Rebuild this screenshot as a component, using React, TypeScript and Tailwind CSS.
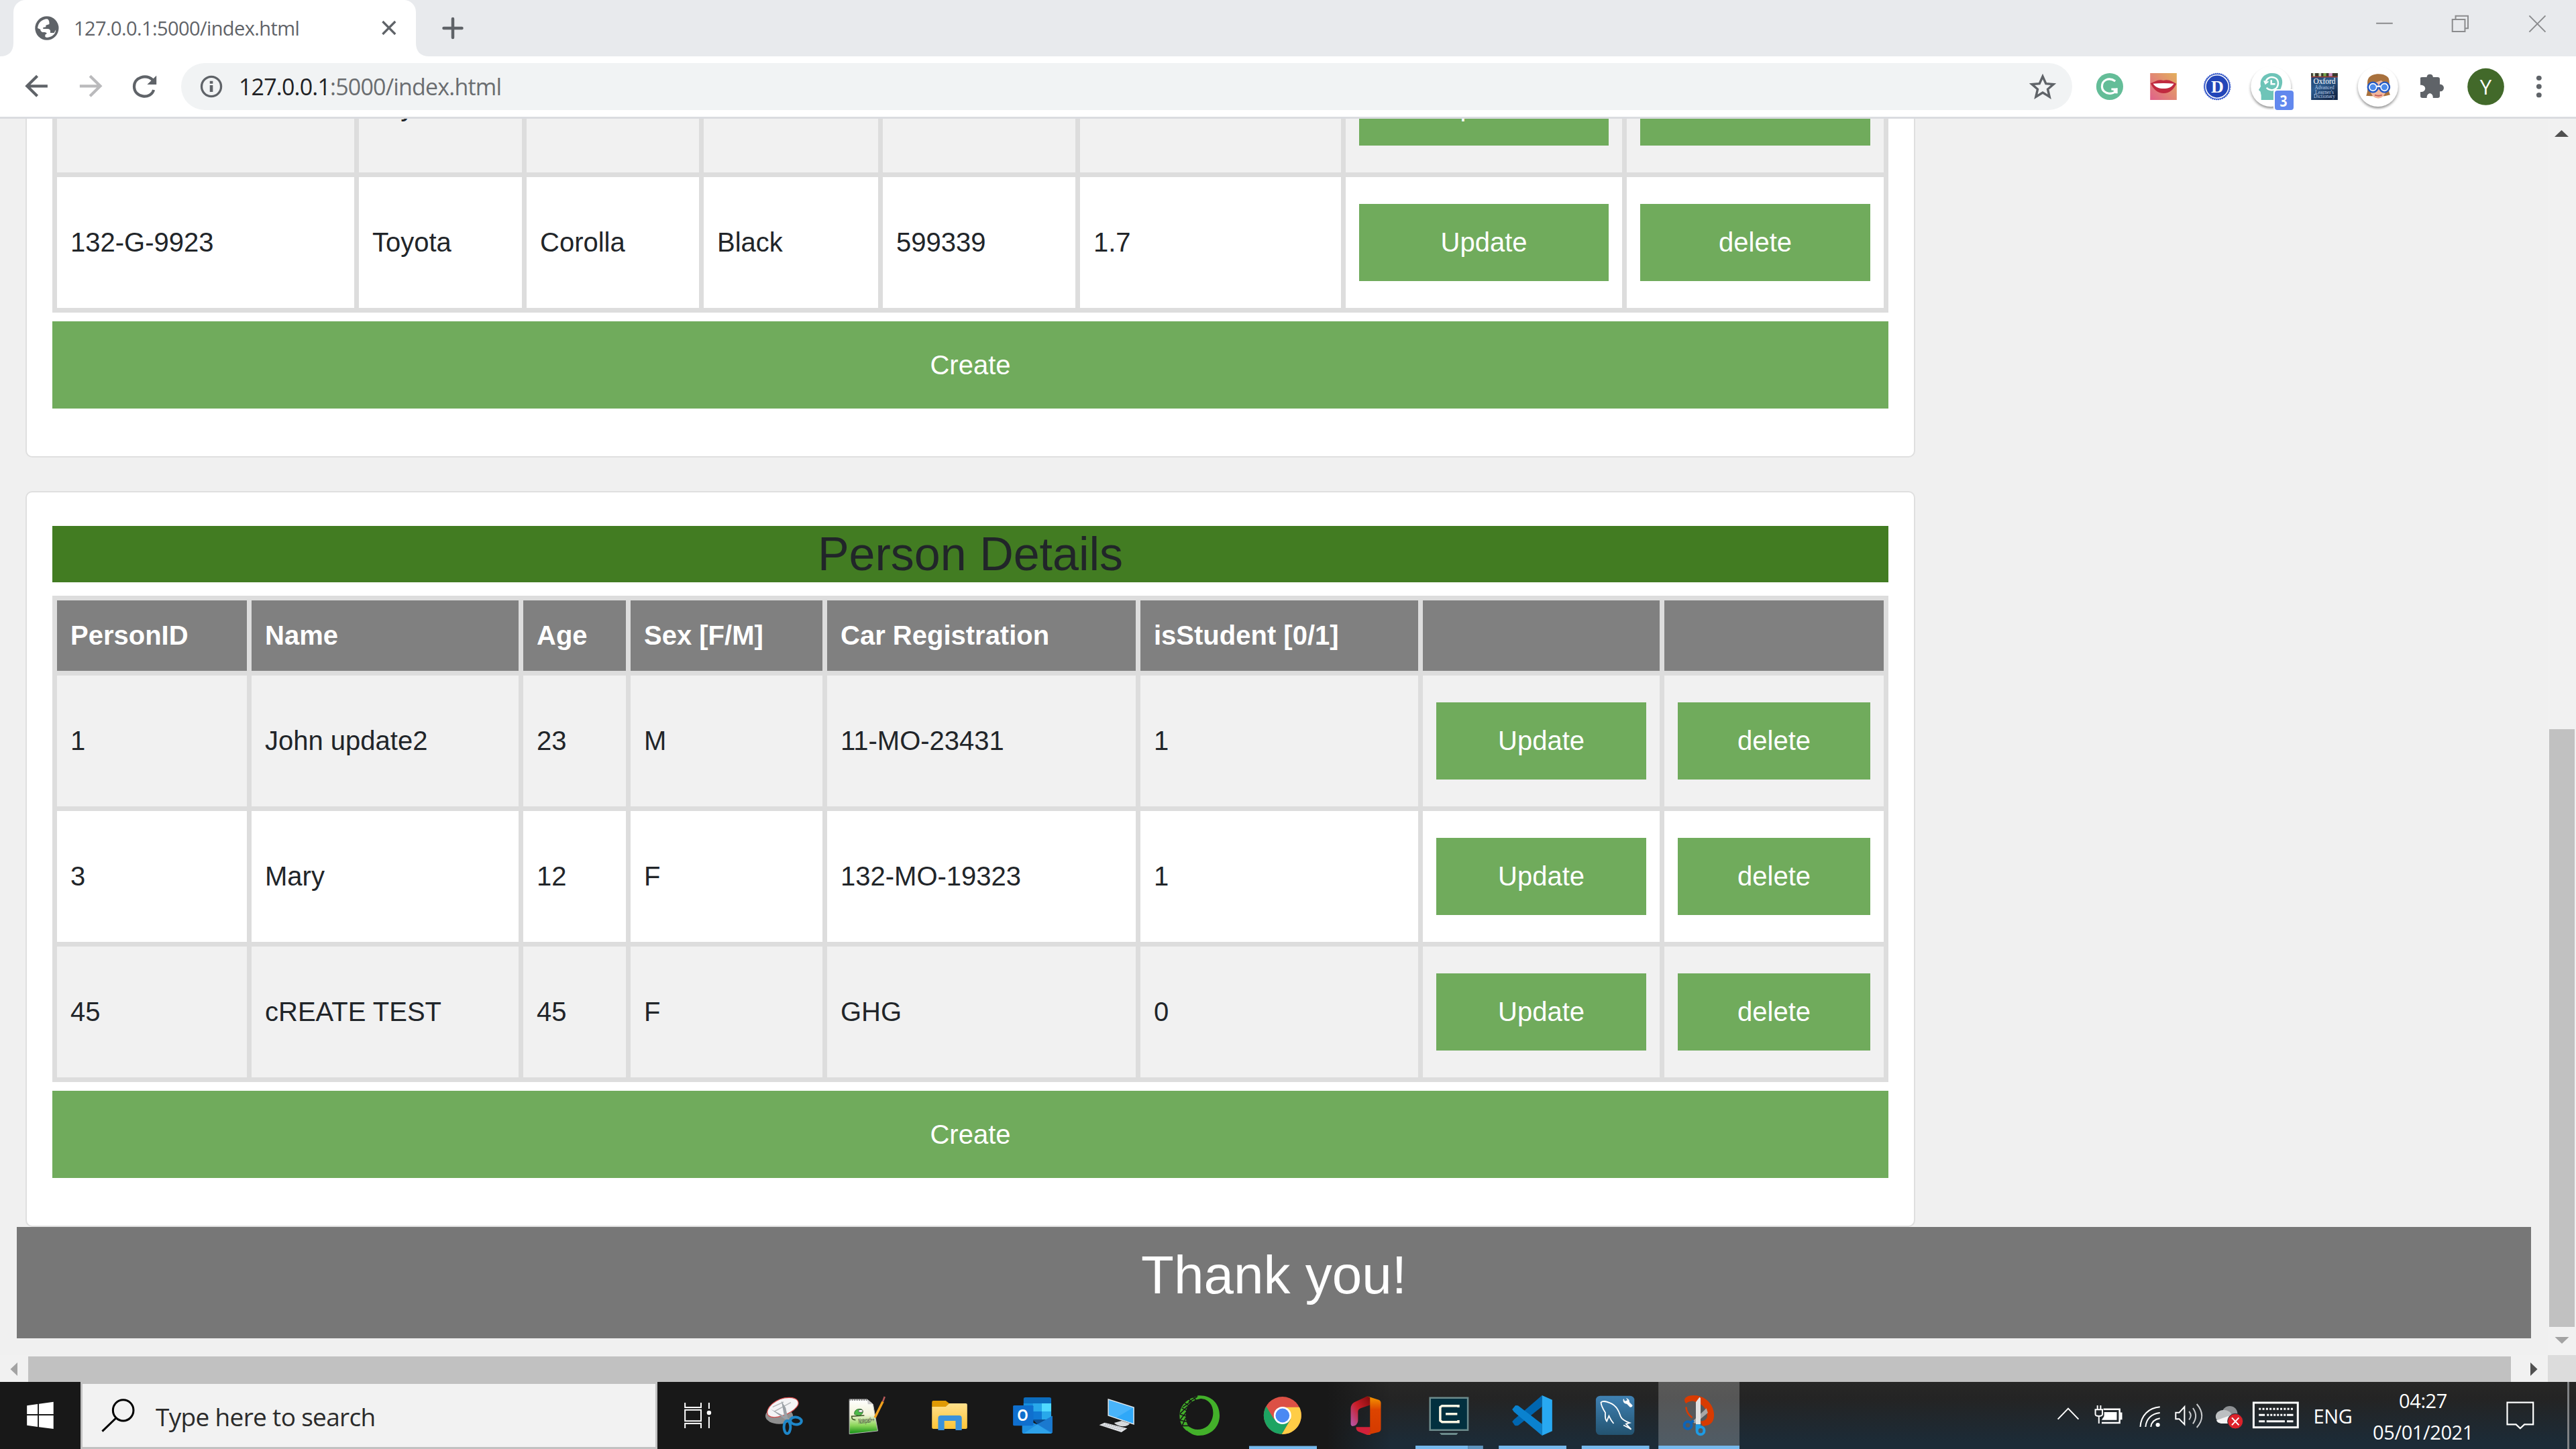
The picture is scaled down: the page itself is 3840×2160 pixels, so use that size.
import React from "react";

type GlyphProps = {
  x: number;
  y: number;
  w: number;
  h: number;
  t?: string;
  children?: React.ReactNode;
  over?: React.ReactNode;
  className?: string;
};

// Artwork is drawn on per-region grids; `t` maps a grid onto screen pixels.
const TAB = "scale(.5102 .33333)";
const EXT = "translate(3000 0) scale(.53571 .33333)";
const START = "translate(0 2000) scale(.63776 .33333)";
const APPS = "translate(1000 2040) scale(.5421 .33333)";
const APPS2 = "translate(1820 2040) scale(.5421 .33333)";
const TRAY = "translate(3020 2000) scale(.52296 .33333)";

function Glyph({ x, y, w, h, t, children, over, className = "" }: GlyphProps) {
  return (
    <svg width={w} height={h} viewBox={`${x} ${y} ${w} ${h}`} className={`block shrink-0 ${className}`} fill="none">
      <g transform={t} className="[&_*]:[vector-effect:non-scaling-stroke]">
        {children}
      </g>
      {over}
    </svg>
  );
}

function TabStrip() {
  return (
    <div className="flex h-[84px] shrink-0 items-stretch bg-[#e8eaed]">
      <Glyph x={0} y={0} w={20} h={84} t="">
        <path d="M0 84C13 84 20 77 20 64V84Z" fill="#fff" />
      </Glyph>
      <div className="flex w-[600px] items-center rounded-t-[18px] bg-white pl-8">
        <Glyph x={52} y={22} w={36} h={40} t={TAB}>
          <ellipse cx="137" cy="126" rx="34.5" ry="53.5" fill="#5f6368" />
          <path
            d="M110 126C111 103 122 86 138 85Q145 90 144 108L134 113V121L126 123V129H139Q147 130 147 139V147H158L163 133C163 152 152 167 137 168L132 165V155L137 150Q136 145 131 144L124 144Q118 140 118 131Z"
            fill="#fff"
          />
        </Glyph>
        <span className="ml-[22px] w-[458px] whitespace-nowrap text-[29px] leading-[40px] tracking-[-0.6px] text-[#5f6368]">
          127.0.0.1:5000/index.html
        </span>
        <Glyph x={568} y={30} w={24} h={24} t={TAB}>
          <path d="M1118 96L1155 153M1155 96L1118 153" stroke="#5f6368" strokeWidth="3.2" />
        </Glyph>
      </div>
      <Glyph x={620} y={0} w={90} h={84} t="">
        <path d="M620 84V64C620 77 627 84 640 84Z" fill="#fff" />
        <path d="M661.500 42H688.500M675 28V56" stroke="#5f6368" strokeWidth="4.500" strokeLinecap="round" />
      </Glyph>
      <div className="flex-1" />
      <Glyph x={3500} y={0} w={340} h={84} t={EXT} className="">
        <g stroke="#8b8c8e" strokeWidth="2">
          <path d="M1012 104.500H1058M1224 87H1259V141H1224ZM1233 87V71.500H1267.500V127H1259M1438 70L1483 143M1483 70L1438 143" />
        </g>
      </Glyph>
    </div>
  );
}

function Toolbar() {
  return (
    <div className="flex h-[93px] shrink-0 items-center border-b-[3px] border-[#dadce0] bg-white">
      <Glyph x={0} y={84} w={270} h={90} t={TAB}>
        <g strokeWidth="4.200">
          <path d="M139 385H80M109 340L79 385L109 430" stroke="#5f6368" />
          <path d="M233 385H293M263 340L293 385L263 430" stroke="#bababc" />
          <path d="M447 358C426 330 392 345 392 387C392 438 441 446 449 402" stroke="#5f6368" />
        </g>
        <path d="M457 338V378H430Z" fill="#5f6368" />
      </Glyph>
      <div className="flex h-[70px] w-[2819px] items-center rounded-full bg-[#f1f3f4]">
        <Glyph x={270} y={94} w={86} h={70} t={TAB}>
          <ellipse cx="617.500" cy="387" rx="28.500" ry="44" stroke="#5f6368" strokeWidth="3.300" />
          <path d="M613 362H622V374H613ZM613 381H622V411H613Z" fill="#5f6368" />
        </Glyph>
        <span className="flex-1 whitespace-nowrap text-[34px] leading-[46px] tracking-[-0.82px] text-[#6a6d70]">
          <span className="text-[#202124]">127.0.0.1</span>:5000/index.html
        </span>
        <Glyph x={3020} y={94} w={69} h={70} t={EXT}>
          <path
            d="M84 342L93 374L114 377L98 399L103 433L84 414L65 433L70 399L54 377L75 374Z"
            stroke="#5f6368"
            strokeWidth="3.400"
          />
        </Glyph>
      </div>
      <Glyph
        x={3089}
        y={84}
        w={751}
        h={90}
        t={EXT}
        over={
          <g textAnchor="middle">
            <text x="3305.500" y="138" fontSize="26" fontWeight="700" fill="#fff" fontFamily="'Liberation Serif', serif">
              D
            </text>
            <rect x="3389" y="133" width="32" height="31" rx="4" fill="#fff" />
            <rect x="3391" y="135" width="28" height="29" rx="4" fill="#6288ee" />
            <text x="3404" y="159" fontSize="23" fontWeight="700" fill="#fff" textLength="11" lengthAdjust="spacingAndGlyphs" fontFamily="'Open Sans', sans-serif">
              3
            </text>
            <g fill="#fff" fontFamily="'Liberation Serif', serif">
              <text x="3465" y="125" fontSize="13" textLength="33" lengthAdjust="spacingAndGlyphs">Oxford</text>
              <text x="3465" y="133" fontSize="8" fill="#b9cbe6" textLength="29" lengthAdjust="spacingAndGlyphs">Advanced</text>
              <text x="3465" y="139.500" fontSize="8" fill="#b9cbe6" textLength="28" lengthAdjust="spacingAndGlyphs">Learner&#39;s</text>
              <text x="3465" y="145.500" fontSize="8" fill="#b9cbe6" textLength="32" lengthAdjust="spacingAndGlyphs">Dictionary</text>
            </g>
            <text x="3705.500" y="141" fontSize="31" fill="#fff" fontFamily="'Open Sans', sans-serif">
              Y
            </text>
          </g>
        }
      >
        <defs>
          <linearGradient id="lip" x1="0" y1="1" x2="1" y2="0">
            <stop offset="0" stopColor="#e0608a" />
            <stop offset="1" stopColor="#e3b05c" />
          </linearGradient>
          <linearGradient id="oxf" x1="0" y1="0" x2="0.6" y2="1">
            <stop offset="0" stopColor="#1d3a63" />
            <stop offset=".5" stopColor="#2c5b8e" />
            <stop offset="1" stopColor="#12284a" />
          </linearGradient>
          <filter id="soft" x="-20%" y="-20%" width="140%" height="140%">
            <feGaussianBlur stdDeviation="4" />
          </filter>
        </defs>
        <ellipse cx="270.500" cy="387" rx="37.500" ry="60" fill="#64bd98" />
        <path d="M286 363C268 343 249 358 249 387C249 424 286 428 289 399H275M289 399V418" stroke="#fff" strokeWidth="3.200" />
        <path d="M276 400L292 394V418Z" fill="#fff" />
        <rect x="383" y="327" width="74" height="120" fill="url(#lip)" />
        <path d="M384 372C396 368 404 352 420 360C436 352 446 368 456 374C449 399 437 417 421 417C404 417 392 400 384 372Z" fill="#c02a3f" />
        <path d="M391 374Q420 370 449 374C443 390 433 396 420 396C408 396 398 390 391 374Z" fill="#fff" />
        <ellipse cx="569.500" cy="387" rx="36" ry="58" fill="#2346b8" stroke="#3c5fd0" strokeWidth="2" strokeDasharray="2 1" />
        <ellipse cx="569.500" cy="387" rx="32" ry="51.500" stroke="#fff" strokeWidth="1.500" />
        <ellipse cx="719" cy="395" rx="56" ry="90" fill="#000" opacity=".38" filter="url(#soft)" />
        <ellipse cx="719" cy="387" rx="56" ry="90" fill="#fff" />
        <path d="M692 447V426Q691 419 690 410L685 402L691 386C686 350 703 327 722 327C744 327 754 350 750 378C747 400 740 410 739 447Z" fill="#6ec4b8" />
        <path d="M704 372C705 352 716 341 728 347C744 355 742 393 727 401C719 405 711 400 707 392M720 358V376H731" stroke="#fff" strokeWidth="2.500" />
        <path d="M700 361L704 374L712 364" stroke="#fff" strokeWidth="2" />
        <rect x="831" y="327" width="74" height="120" fill="url(#oxf)" />
        <path d="M831 327H905V343H831Z" fill="#3b3a2c" />
        <path d="M836 327H842V341H836ZM852 327H859V341H852Z" fill="#c9d4b8" />
        <path d="M865 327H873V341H865Z" fill="#7aa54a" />
        <path d="M880 327H890V341H880Z" fill="#cf8fc0" />
        <path d="M831 342H905V346H831Z" fill="#b03c34" />
        <ellipse cx="1017" cy="395" rx="56" ry="90" fill="#000" opacity=".38" filter="url(#soft)" />
        <ellipse cx="1017" cy="387" rx="56" ry="90" fill="#fff" />
        <path d="M984 428C992 400 984 370 990 352C998 324 1040 324 1047 352C1052 380 1043 400 1051 424L1036 430H998Z" fill="#a8713d" />
        <path d="M997 376L1026 360L1038 374V415Q1030 440 1018 440Q1004 440 997 415Z" fill="#f2b79c" />
        <path d="M1008 425Q1019 431 1028 425" stroke="#c05a5a" strokeWidth="2" />
        <ellipse cx="1003" cy="390" rx="14" ry="22" fill="#4d8bea" stroke="#2258c4" strokeWidth="2.500" />
        <ellipse cx="1035" cy="390" rx="14" ry="22" fill="#4d8bea" stroke="#2258c4" strokeWidth="2.500" />
        <ellipse cx="1003" cy="390" rx="10" ry="16" stroke="#fff" strokeWidth="1.600" />
        <ellipse cx="1035" cy="390" rx="10" ry="16" stroke="#fff" strokeWidth="1.600" />
        <path d="M1014 386H1024" stroke="#fff" strokeWidth="2.500" />
        <path
          d="M1135 349Q1135 345 1141 345H1153C1152 328 1171 328 1170 345H1183Q1189 345 1189 353V377C1204 376 1204 410 1189 409V430Q1189 438 1183 438H1170C1171 411 1152 411 1153 438H1141Q1135 438 1135 430V411C1153 412 1153 379 1135 380Z"
          fill="#5f6368"
        />
        <ellipse cx="1317" cy="388" rx="51" ry="82.500" fill="#42692a" />
        <g fill="#5f6368">
          <ellipse cx="1465" cy="349" rx="7.300" ry="11" />
          <ellipse cx="1465" cy="387" rx="7.300" ry="11" />
          <ellipse cx="1465" cy="425" rx="7.300" ry="11" />
        </g>
      </Glyph>
    </div>
  );
}

const cars = [
  ["", "Toyota", "", "", "", ""],
  ["132-G-9923", "Toyota", "Corolla", "Black", "599339", "1.7"],
];

const personHead = ["PersonID", "Name", "Age", "Sex [F/M]", "Car Registration", "isStudent [0/1]", "", ""];

const people = [
  ["1", "John update2", "23", "M", "11-MO-23431", "1"],
  ["3", "Mary", "12", "F", "132-MO-19323", "1"],
  ["45", "cREATE TEST", "45", "F", "GHG", "0"],
];

function Row({ cells, tint }: { cells: string[]; tint: boolean }) {
  const bg = tint ? "bg-[#f1f1f1]" : "bg-white";
  return (
    <>
      {cells.map((c, i) => (
        <div key={i} className={`flex h-[195px] items-center whitespace-nowrap px-5 pb-0.5 ${bg}`}>
          {c}
        </div>
      ))}
      {["Update", "delete"].map((label) => (
        <div key={label} className={`flex h-[195px] items-center px-5 ${bg}`}>
          <button className="h-[115px] w-full bg-[#70ab5c] pb-0.5 text-white">{label}</button>
        </div>
      ))}
    </>
  );
}

function CreateButton() {
  return <button className="mt-[13px] block h-[130px] w-full bg-[#70ab5c] text-white">Create</button>;
}

function Page() {
  return (
    <div className="flex h-[1843px] w-[3798px] flex-col overflow-hidden bg-[#f0f0f0] font-['Liberation_Sans',Arial,sans-serif] text-[40px] leading-[60px] text-[#212529]">
      <div className="-mt-[115px] ml-[38px] w-[2817px] shrink-0 rounded-b-[10px] border-2 border-t-0 border-[#dfdfdf] bg-white px-[38px] pb-[71px]">
        <div className="grid grid-cols-[443px_243px_257px_260px_287px_389px_412px_383px] gap-[7px] bg-[#ddd] p-[7px] pt-0">
          {cars.map((r, i) => (
            <Row key={i} cells={r} tint={i % 2 === 0} />
          ))}
        </div>
        <CreateButton />
      </div>
      <div className="ml-[38px] mt-[50px] w-[2817px] shrink-0 rounded-[10px] border-2 border-[#dfdfdf] bg-white px-[38px] pb-[71px] pt-[50px]">
        <h2 className="mb-5 h-[84px] bg-[#427c22] text-center text-[70px] leading-[84px]">Person Details</h2>
        <div className="grid grid-cols-[283px_398px_153px_286px_460px_414px_353px_327px] gap-[7px] bg-[#ddd] p-[7px]">
          {personHead.map((h, i) => (
            <div key={i} className="flex h-[105px] items-center whitespace-nowrap bg-[#808080] px-5 pb-px font-bold text-white">
              {h}
            </div>
          ))}
          {people.map((r, i) => (
            <Row key={i} cells={r} tint={i % 2 === 0} />
          ))}
        </div>
        <CreateButton />
      </div>
      <footer className="ml-[25px] h-[166px] w-[3748px] shrink-0 bg-[#777] pt-6 text-center text-[80px] leading-[96px] text-white">
        Thank you!
      </footer>
    </div>
  );
}

function Viewport() {
  return (
    <div className="flex h-[1883px] flex-col">
      <div className="flex h-[1843px]">
        <Page />
        <div className="flex w-[42px] flex-col items-center bg-[#f1f1f1]">
          <Glyph x={3798} y={177} w={42} h={910}>
            <path d="M3808 204L3818.500 194L3829 204Z" fill="#505050" />
          </Glyph>
          <div className="h-[891px] w-[38px] bg-[#c1c1c1]" />
          <Glyph x={3798} y={1978} w={42} h={42}>
            <path d="M3808.500 1993H3829.500L3819 2003Z" fill="#a3a3a3" />
          </Glyph>
        </div>
      </div>
      <div className="flex h-[40px]">
        <div className="flex w-[3798px] items-end bg-[#f1f1f1]">
          <Glyph x={0} y={2020} w={42} h={40}>
            <path d="M26 2031V2051L15.500 2041Z" fill="#a3a3a3" />
          </Glyph>
          <div className="h-[38px] w-[3701px] bg-[#c1c1c1]" />
          <Glyph x={3743} y={2020} w={55} h={40}>
            <path d="M3772 2031V2051L3782.500 2041Z" fill="#505050" />
          </Glyph>
        </div>
        <div className="flex-1 bg-[#dcdcdc]" />
      </div>
    </div>
  );
}

function AppIcons() {
  const cell = (i: number) => ({ x: 980 + 124 * i, y: 2060, w: 124, h: 100 });
  return (
    <>
      <Glyph {...cell(0)} t={APPS}>
        <path d="M39 153V174H83V153M39 267V246H83V267M39 185H83V235H39ZM105 153V180M105 216V267" stroke="#fff" strokeWidth="2" />
        <ellipse cx="105" cy="198" rx="6" ry="9.500" fill="#fff" />
      </Glyph>
      <Glyph {...cell(1)} t={APPS}>
        <ellipse cx="298" cy="212" rx="38" ry="36" fill="#8f8f8f" />
        <path d="M268 210C255 180 290 130 325 130C352 130 355 155 346 172C330 204 285 232 268 210Z" fill="#f4f4f6" stroke="#d84a4a" strokeWidth="1.200" />
        <path d="M280 172L310 150M285 192L330 152" stroke="#b5b8bb" strokeWidth="1.500" />
        <path d="M275 182L326 224L318 232ZM304 145L316 176L322 224L312 214Z" fill="#9aa0a6" />
        <ellipse cx="344" cy="234" rx="15" ry="17" stroke="#1e86c8" strokeWidth="4" transform="rotate(-20 344 234)" />
        <ellipse cx="320" cy="262" rx="9" ry="29" stroke="#1e86c8" strokeWidth="4" />
      </Glyph>
      <Glyph
        {...cell(2)}
        t={APPS}
        over={
          <text x="1292" y="2121" fontSize="11" fontStyle="italic" fill="#333" textAnchor="middle" textLength="24" lengthAdjust="spacingAndGlyphs" transform="rotate(-7 1292 2121)" fontFamily="'Liberation Sans', sans-serif">
            Notepad++
          </text>
        }
      >
        <defs>
          <linearGradient id="npp" x1="0" y1="0" x2="0" y2="1">
            <stop offset="0" stopColor="#fff" />
            <stop offset=".45" stopColor="#f2f2d8" />
            <stop offset=".75" stopColor="#8cd65a" />
            <stop offset="1" stopColor="#0c8a10" />
          </linearGradient>
        </defs>
        <path d="M491 138H540L556 160L569 279L491 293Z" fill="url(#npp)" stroke="#bdbdbd" strokeWidth="1" />
        <path d="M491 141H540" stroke="#888" strokeWidth="2" strokeDasharray="2 1.500" />
        <path d="M540 138L556 160H542Z" fill="#c9c9c9" />
        <path d="M505 205C503 185 515 178 524 182C532 190 528 205 518 212Z" fill="#4cb848" stroke="#2b6a28" strokeWidth=".8" />
        <circle cx="522" cy="190" r="6" fill="#fff" stroke="#333" strokeWidth=".8" />
        <path d="M496 214L532 210M498 214Q496 230 508 230" stroke="#38531f" strokeWidth="1.500" />
        <path d="M561 220L583 148" stroke="#f0a01c" strokeWidth="3.500" />
        <path d="M583 148L588 126" stroke="#b85a5a" strokeWidth="2.500" />
      </Glyph>
      <Glyph {...cell(3)} t={APPS}>
        <defs>
          <linearGradient id="fold" x1="0" y1="0" x2="0" y2="1">
            <stop offset="0" stopColor="#ffe08c" />
            <stop offset="1" stopColor="#fcc537" />
          </linearGradient>
        </defs>
        <path d="M718 150Q718 144 722 144H756L766 157V172H718Z" fill="#e09a04" />
        <path d="M718 171H756L766 156H811Q815 156 815 161V264Q815 270 811 270H722Q718 270 718 264Z" fill="url(#fold)" />
        <path d="M735 276V222Q735 210 743 210H793Q800 210 800 222V276H783V234H752V276Z" fill="#3a92dc" />
      </Glyph>
      <Glyph
        {...cell(4)}
        t={APPS}
        over={
          <text x="1524.500" y="2118" fontSize="24" fontWeight="700" fill="#fff" textAnchor="middle" textLength="16" lengthAdjust="spacingAndGlyphs" fontFamily="'Liberation Sans', sans-serif">
            O
          </text>
        }
      >
        <path d="M970 135Q970 129 975 129H1041Q1046 129 1046 135V220H970Z" fill="#0c6cbd" />
        <path d="M970 156H995V192H970Z" fill="#1490df" />
        <path d="M995 156H1020V192H995Z" fill="#28a8ea" />
        <path d="M1020 156H1046V192H1020Z" fill="#50d9ff" />
        <path d="M995 192H1020V228H995Z" fill="#0f78d4" />
        <path d="M1020 192H1046V228H1020Z" fill="#28a8ea" />
        <path d="M970 192H995V228H970Z" fill="#0a4f96" />
        <path d="M966 222L1007 250L1049 212V285Q1049 291 1044 291H971Q966 291 966 285Z" fill="#1e8fe0" />
        <path d="M995 228H1032L1008 250Z" fill="#0b4f93" />
        <path d="M1008 250L1049 212V288Z" fill="#1a79cf" />
        <path d="M970 291L1008 250L1047 291Z" fill="#2ea2ea" />
        <rect x="941" y="165" width="56" height="91" rx="4" fill="#0f6fce" />
      </Glyph>
      <Glyph {...cell(5)} t={APPS}>
        <path d="M1203 138L1273 174V249L1203 210Z" fill="#2fa8f8" stroke="#dfe6ea" strokeWidth="1.500" />
        <path d="M1205 142L1270 176L1225 220L1205 209Z" fill="#5cbdfb" opacity=".6" />
        <path d="M1219 243L1240 234L1262 246Q1258 258 1243 259Q1226 256 1219 243Z" fill="#d6d9dc" />
        <path d="M1178 253L1193 242L1255 268L1239 285Z" fill="#e3e5e8" />
        <path d="M1187 252L1240 276M1194 247L1247 270" stroke="#a9adb3" strokeWidth="1.200" strokeDasharray="2 1" />
      </Glyph>
      <Glyph {...cell(6)} t={APPS}>
        <path d="M1448 121C1485 116 1509 155 1509 210C1509 262 1485 300 1452 300C1438 300 1428 290 1418 276L1427 262C1440 278 1462 276 1476 257C1494 230 1496 180 1482 154C1475 140 1465 134 1453 135Z" fill="#43b02a" />
        <path d="M1453 124C1420 130 1399 165 1399 210C1399 240 1406 262 1418 278L1427 264C1412 240 1412 180 1427 156Q1437 140 1455 136Z" fill="#43b02a" />
        <path d="M1436 124L1447 150M1424 136L1438 158M1413 154L1430 172M1405 176L1422 192M1400 204L1418 214M1400 232L1420 238M1406 256L1424 256M1447 126L1424 150M1432 146L1408 172M1421 170L1400 202M1417 196L1400 232M1416 220L1406 256" stroke="#181818" strokeWidth="1.600" />
      </Glyph>
      <Glyph
        {...cell(7)}
        over={
          <g transform="translate(1911.800 2110)">
            <circle r="28" fill="#dc5045" />
            <path d="M-24.400 -13.700A28 28 0 0 0 -1 28L12.500 5L0 0L-13 5Z" fill="#1da462" />
            <path d="M25.200 -12.300A28 28 0 0 1 -1 28L12 6L3 -12.300Z" fill="#ffcd46" />
            <circle r="13" fill="#fff" />
            <circle r="10.400" fill="#4a89f3" />
            <path d="M-49.800 45.500H51.200V50H-49.800Z" fill="#76b9ed" />
          </g>
        }
      />
      <Glyph {...cell(8)} t={APPS2}>
        <defs>
          <linearGradient id="o1" x1="1" y1="0" x2="0" y2="1">
            <stop offset="0" stopColor="#7e0c0c" />
            <stop offset=".5" stopColor="#c81e28" />
            <stop offset="1" stopColor="#b55ab0" />
          </linearGradient>
          <linearGradient id="o2" x1="0" y1="0" x2="0" y2="1">
            <stop offset="0" stopColor="#f59a00" />
            <stop offset=".35" stopColor="#dd4400" />
            <stop offset="1" stopColor="#d43a00" />
          </linearGradient>
        </defs>
        <path d="M357 180Q357 160 367 151L402 124L411 130V163L384 178Q377 183 377 193V235Q375 256 362 258Q357 256 357 246Z" fill="url(#o1)" />
        <path d="M372 262H411V297H402L378 282Q371 276 372 262Z" fill="#d3213a" />
        <path d="M402 124L434 140Q440 144 440 155V270Q440 281 434 284L402 297L410 285V130Z" fill="url(#o2)" />
      </Glyph>
      <Glyph {...cell(9)} t={APPS2}>
        <rect x="575" y="131" width="104" height="144" fill="#02303f" stroke="#6c8b8c" strokeWidth="2.500" />
        <path d="M653 174V167H608L603 173V233L608 239H653V231M618 203H650" stroke="#fdf6e3" strokeWidth="3.500" />
        <path d="M601 288H652L648 297H606Z" fill="#6c8b8c" />
        <path d="M535 345H679V360H535Z" fill="#76b9ed" />
        <path d="M679 345H721V360H679Z" fill="#5d93bd" />
      </Glyph>
      <Glyph {...cell(10)} t={APPS2}>
        <path d="M801 238L808 254Q812 258 818 254L883 170V120L806 228Z" fill="#0066b0" />
        <path d="M801 183L810 165L817 166L883 248V300L806 194Z" fill="#0a82cf" />
        <path d="M883 120L911 140V280L883 300Z" fill="#28a9f2" />
        <path d="M764 345H950V360H764Z" fill="#76b9ed" />
      </Glyph>
      <Glyph {...cell(11)} t={APPS2}>
        <defs>
          <linearGradient id="my" x1="0" y1="0" x2="0" y2="1">
            <stop offset="0" stopColor="#3f81b3" />
            <stop offset="1" stopColor="#235370" />
          </linearGradient>
        </defs>
        <rect x="1031" y="122" width="106" height="175" rx="12" ry="19" fill="url(#my)" />
        <path d="M1080 246C1072 232 1070 222 1067 212L1061 236C1055 225 1057 208 1057 197C1050 180 1046 168 1045 152C1050 142 1060 148 1070 154C1088 166 1094 190 1099 214C1102 226 1112 236 1124 243L1114 248L1128 272C1120 264 1114 258 1107 254" stroke="#fff" strokeWidth="1.800" />
        <path d="M1107 134L1111 146L1118 142L1114 132C1122 136 1124 144 1123 150L1132 165Q1131 175 1125 173L1116 158C1108 157 1104 146 1107 134Z" fill="#fff" />
        <path d="M992 345H1178V360H992Z" fill="#76b9ed" />
      </Glyph>
      <Glyph {...cell(12)} w={125} t={APPS2}>
        <path d="M1203 60H1426V345H1203Z" fill="#fff" opacity=".23" />
        <path d="M1203 345H1426V360H1203Z" fill="#76b9ed" />
        <path d="M1279 157C1268 135 1280 120 1300 120C1334 120 1356 165 1356 208C1356 240 1346 257 1325 257L1318 236C1334 234 1338 222 1337 206C1335 176 1322 156 1300 146Q1288 144 1279 157Z" fill="#d83b01" />
        <path d="M1279 172C1280 190 1284 206 1296 220" stroke="#d83b01" strokeWidth="2.500" />
        <path d="M1335 178L1296 238L1304 246L1339 198Z" fill="#a7a7a7" />
        <path d="M1306 150L1316 128L1319 132V250H1306Z" fill="#e2e2e2" />
        <path d="M1306 250H1319V262H1306Z" fill="#1e9be4" />
        <ellipse cx="1284" cy="254" rx="10" ry="16" stroke="#0d64b8" strokeWidth="4" />
        <path d="M1292 243L1300 233" stroke="#0d64b8" strokeWidth="4" />
        <ellipse cx="1319" cy="278" rx="10" ry="17" stroke="#1e9be4" strokeWidth="4" />
        <path d="M1309 252V275" stroke="#1e9be4" strokeWidth="4" />
      </Glyph>
    </>
  );
}

function Tray() {
  return (
    <>
      <Glyph x={3057} y={2060} w={378} h={100} t={TRAY}>
        <g stroke="#fff" strokeWidth="2">
          <path d="M91 347L120.500 299L150 347" />
          <path d="M221 302H267V363H216M268 320H272V345H268" strokeWidth="2.500" />
          <path d="M198 304H218V325Q218 333 208 333Q198 333 198 325ZM204 285V303M213 285V303M208 333V366" />
        </g>
        <path d="M223 315H259V350H216L219 342Q223 338 223 330Z" fill="#fff" />
        <g stroke="#fff" strokeWidth="2">
          <path d="M326 381C328 330 350 296 382 292M341 381C343 345 358 322 382 318M356 381C358 360 366 347 382 343" />
          <path d="M427 317H437L452 291V370L437 346H427Z" />
          <path d="M465 312Q475 330 465 349M476 297Q492 332 476 367M487 279Q516 332 487 384" stroke="#c9cbcd" />
        </g>
        <ellipse cx="376" cy="372" rx="6" ry="9" fill="#fff" />
        <ellipse cx="581" cy="322" rx="22" ry="34" fill="#8d9093" />
        <ellipse cx="564" cy="335" rx="23" ry="30" fill="#bcbfc1" />
        <path d="M543 352L578 332V366H556Q546 364 543 352Z" fill="#f4f4f4" />
        <ellipse cx="597" cy="356" rx="22" ry="34" fill="#dc222a" stroke="#222c33" strokeWidth="1" />
        <path d="M587 340L607 373M607 340L587 373" stroke="#fff" strokeWidth="2" />
        <rect x="649" y="273" width="126" height="110" stroke="#fff" strokeWidth="3" />
        <path d="M664 301H762" stroke="#fff" strokeWidth="3" strokeDasharray="3 2.300" />
        <path d="M664 328H681M744 328H762M664 356H681M686 356H738M744 356H762" stroke="#fff" strokeWidth="3" />
        <path d="M687 328H742" stroke="#fff" strokeWidth="3" strokeDasharray="3 2" />
      </Glyph>
      <div className="w-[85px] pt-[2px] text-center text-[29px] leading-[40px] tracking-[-0.4px]">ENG</div>
      <div className="flex w-[184px] flex-col items-center pt-px text-[29px] leading-[47px] tracking-[-0.4px]">
        <span>04:27</span>
        <span>05/01/2021</span>
      </div>
      <Glyph x={3704} y={2060} w={123} h={100} t={TRAY}>
        <path d="M1372 272H1446V370H1421L1409 388L1397 370H1372Z" stroke="#fff" strokeWidth="2.200" />
      </Glyph>
      <div className="h-full w-[3px] bg-[#808284]" />
      <div className="w-[10px]" />
    </>
  );
}

function Taskbar() {
  return (
    <div className="flex h-[100px] items-center bg-[linear-gradient(90deg,#181818_0%,#181818_51.5%,transparent_54%),linear-gradient(#272726_0%,#242424_25%,#1c2b37_90%)] text-white">
      <Glyph x={0} y={2060} w={120} h={100} t={START}>
        <path d="M63 286L88 279V324H63ZM91 278L125 269V324H91ZM63 330H88V381L63 374ZM91 330H125V390L91 382Z" fill="#fff" />
      </Glyph>
      <div className="flex h-[100px] w-[860px] items-center border-[3px] border-[#c1c1c1] bg-[#f2f2f2] text-[#2b2b2b]">
        <Glyph x={123} y={2063} w={109} h={94} t={START}>
          <ellipse cx="288" cy="307" rx="24" ry="47" stroke="#000" strokeWidth="3" />
          <path d="M271 342L239 401" stroke="#000" strokeWidth="3" />
        </Glyph>
        <span className="whitespace-nowrap pt-1 text-[37px] leading-[50px] tracking-[-0.68px]">Type here to search</span>
      </div>
      <AppIcons />
      <div className="flex-1" />
      <Tray />
    </div>
  );
}

export default function App() {
  return (
    <div className="flex h-[2160px] w-[3840px] flex-col overflow-hidden font-['Open_Sans','Noto_Sans',sans-serif]">
      <TabStrip />
      <Toolbar />
      <Viewport />
      <Taskbar />
    </div>
  );
}
